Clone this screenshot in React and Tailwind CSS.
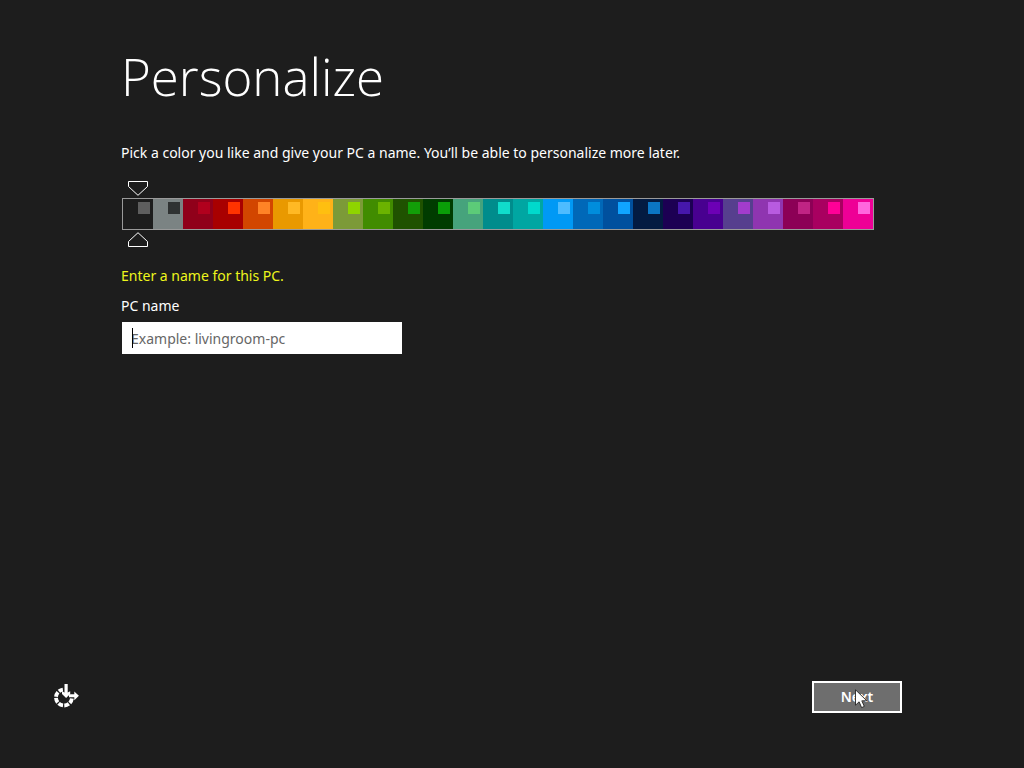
import { useState } from "react";

const SWATCH_SIZE = 30;

const SWATCHES = [
  { name: "Black", bg: "#1d1d1d", accent: "#5e5e5e" },
  { name: "Gray", bg: "#7b8383", accent: "#2f3232" },
  { name: "Crimson", bg: "#90001a", accent: "#b1001d" },
  { name: "Red", bg: "#a80000", accent: "#ff3300" },
  { name: "Rust", bg: "#d24600", accent: "#ff8326" },
  { name: "Amber", bg: "#e99900", accent: "#ffb924" },
  { name: "Yellow", bg: "#ffb218", accent: "#ffbf10" },
  { name: "Olive", bg: "#7c9a38", accent: "#8fd400" },
  { name: "Leaf", bg: "#418c00", accent: "#6bb300" },
  { name: "Green", bg: "#1f5200", accent: "#129e08" },
  { name: "Dark green", bg: "#003c00", accent: "#0a9e08" },
  { name: "Sea green", bg: "#46a37c", accent: "#5ccb78" },
  { name: "Teal", bg: "#008c8c", accent: "#10dccb" },
  { name: "Turquoise", bg: "#00a6a2", accent: "#00d9cc" },
  { name: "Sky blue", bg: "#0099f5", accent: "#4dbcff" },
  { name: "Blue", bg: "#0068b8", accent: "#008ddc" },
  { name: "Cobalt", bg: "#00509e", accent: "#10a5ff" },
  { name: "Navy", bg: "#031b42", accent: "#0b76c4" },
  { name: "Indigo", bg: "#1c0053", accent: "#4617ac" },
  { name: "Violet", bg: "#480090", accent: "#6c00b5" },
  { name: "Slate purple", bg: "#563f8e", accent: "#a33ccd" },
  { name: "Purple", bg: "#8f35b0", accent: "#b85be0" },
  { name: "Plum", bg: "#8c0056", accent: "#c02484" },
  { name: "Magenta", bg: "#a80060", accent: "#ff0097" },
  { name: "Pink", bg: "#ee0096", accent: "#ff66dd" },
];

function Marker({ index, flipped }) {
  return (
    <svg
      width="20"
      height="15"
      viewBox="0 0 20 15"
      className={flipped ? "rotate-180" : ""}
      style={{ marginLeft: index * SWATCH_SIZE + 6 }}
      aria-hidden="true"
    >
      <path d="M.5.5h19v5L10 14.3.5 5.5z" fill="none" stroke="#fff" />
    </svg>
  );
}

function ColorPicker({ selected, onSelect }) {
  return (
    <div role="radiogroup" aria-label="Color" className="w-max">
      <Marker index={selected} />
      <div className="my-0.5 flex border border-[#9a9a9a]">
        {SWATCHES.map((swatch, i) => (
          <label
            key={swatch.name}
            className="flex h-[30px] w-[30px] justify-end p-[3px]"
            style={{ backgroundColor: swatch.bg }}
          >
            <input
              type="radio"
              name="color"
              aria-label={swatch.name}
              checked={selected === i}
              onChange={() => onSelect(i)}
              className="h-3 w-3 appearance-none"
              style={{ backgroundColor: swatch.accent }}
            />
          </label>
        ))}
      </div>
      <Marker index={selected} flipped />
    </div>
  );
}

function EaseOfAccessIcon() {
  return (
    <svg width="28" height="26" viewBox="0 0 28 26" aria-hidden="true">
      <path
        d="M19.9 14.6a8 8 0 1 1-9-9"
        fill="none"
        stroke="#fff"
        strokeWidth="3.8"
        strokeDasharray="4.9 1.3"
      />
      <path d="M12.5 0h3.2v8.6l2.5-1.4v2.9L14.1 14 10 10.1V7.2l2.5 1.4z" fill="#fff" />
      <path d="M17 10.3h5.3V7.4l4.6 4.4-4.6 4.4v-2.9H17z" fill="#fff" />
    </svg>
  );
}

function Pointer() {
  return (
    <svg
      width="13"
      height="20"
      viewBox="0 0 13 20"
      className="pointer-events-none absolute left-[43px] top-2"
      aria-hidden="true"
    >
      <path
        d="M.5.8v15.4l3.6-3.4 2.5 5.8 2.7-1.2-2.5-5.6h5z"
        fill="#fff"
        stroke="#222"
        strokeWidth=".9"
      />
    </svg>
  );
}

export default function App() {
  const [color, setColor] = useState(0);
  const [pcName, setPcName] = useState("");

  return (
    <div
      className="flex min-h-screen flex-col bg-[#1d1d1d] text-[14px] leading-5 text-white"
      style={{ fontFamily: "'Noto Sans', 'Open Sans', sans-serif" }}
    >
      <main className="flex flex-1 flex-col items-start px-[121px] pt-10">
        <h1 className="font-['Open_Sans'] text-[51px] font-light leading-[72px]">Personalize</h1>
        <p className="mt-[31px]">
          Pick a color you like and give your PC a name. You’ll be able to personalize more later.
        </p>
        <div className="mt-[18px] pl-px">
          <ColorPicker selected={color} onSelect={setColor} />
        </div>
        <p className="mt-[19px] text-[#eef61c]">Enter a name for this PC.</p>
        <label htmlFor="pc-name" className="mt-[10px]">
          PC name
        </label>
        <div className="relative mt-[6px] pl-px">
          <input
            id="pc-name"
            type="text"
            value={pcName}
            onChange={(e) => setPcName(e.target.value)}
            placeholder="Example: livingroom-pc"
            className="block h-8 w-[280px] bg-white px-[9px] text-black outline-none placeholder:text-[#666]"
          />
          {!pcName && <span className="absolute left-[11px] top-[6px] h-5 w-px bg-black" />}
        </div>
      </main>

      <footer className="flex items-center justify-between pb-[55px] pl-[52px] pr-[122px]">
        <button type="button" aria-label="Ease of access">
          <EaseOfAccessIcon />
        </button>
        <div className="relative">
          <button
            type="button"
            className="block h-8 w-[90px] border-2 border-white bg-[#6e6e6e] font-semibold"
          >
            Next
          </button>
          <Pointer />
        </div>
      </footer>
    </div>
  );
}
